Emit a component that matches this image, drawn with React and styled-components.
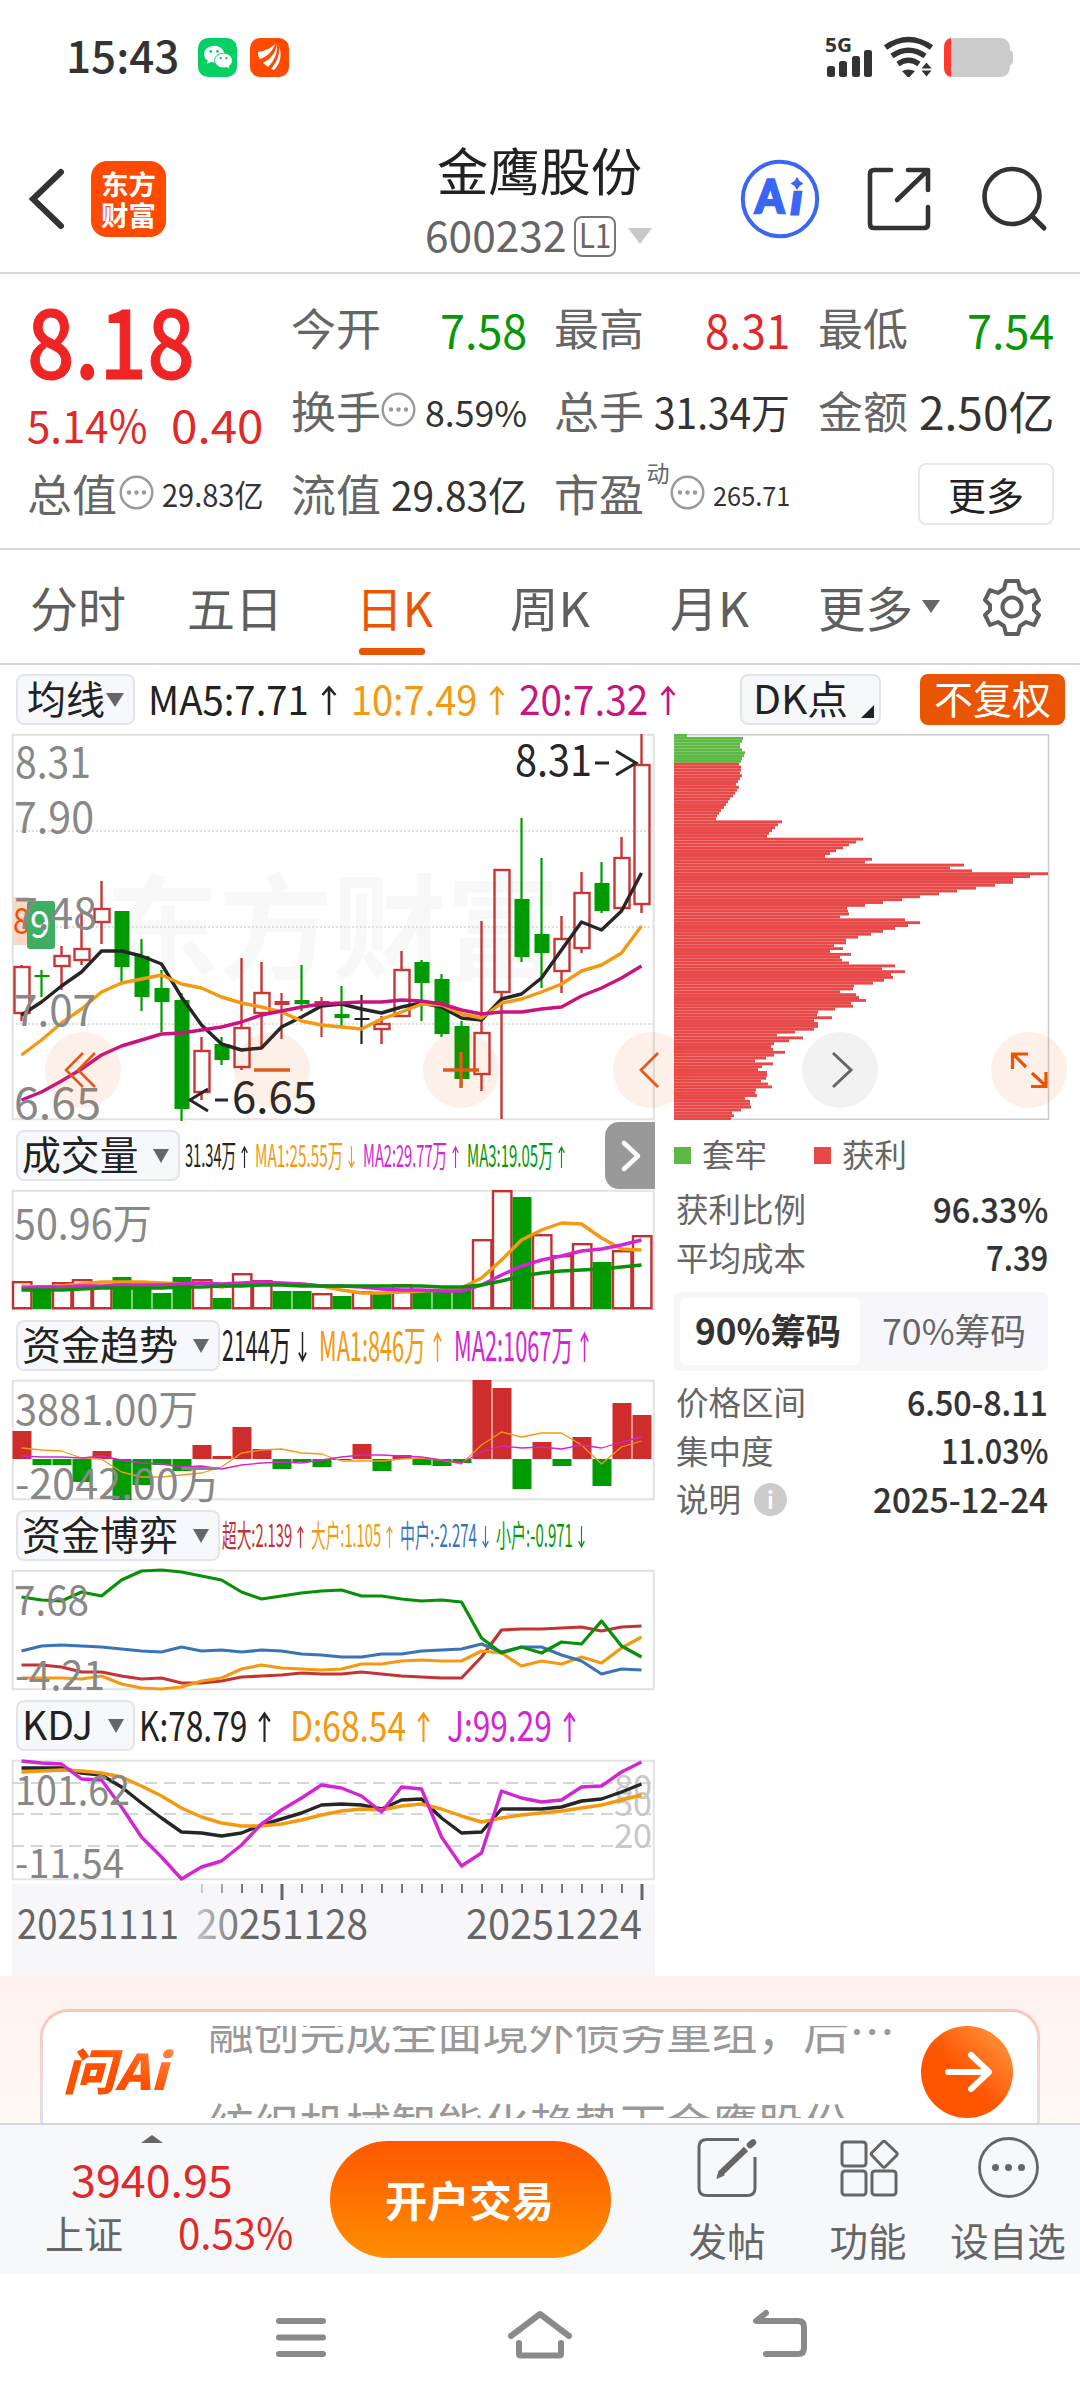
import React, { useLayoutEffect, useRef, useState } from 'react';
import styled, { createGlobalStyle } from 'styled-components';
import { AiFillWechat } from 'react-icons/ai';

/* ───────── palette ───────── */

const RED = '#e02a2a';
const GREEN = '#079707';
const ORANGE = '#ea5504';
const AMBER = '#f39a12';
const PINK = '#c9147f';
const MAGENTA = '#d326d3';
const BLUE = '#3a74b8';
const INK = '#222222';
const GRAY = '#666666';
const FONT = '"Noto Sans CJK SC", sans-serif';

const GlobalStyle = createGlobalStyle`
  * { box-sizing: border-box; }
  body { margin: 0; background: #ffffff; }
  svg { overflow: visible; }
`;

/* ───────── text that is squeezed to its slot ───────── */

const FitBox = styled.span`
  display: inline-block;
  flex: none;
  width: ${(p) => p.$w}px;
  margin-left: ${(p) => p.$ml || 0}px;
  margin-top: ${(p) => p.$mt || 0}px;
  font-size: ${(p) => p.$size}px;
  font-weight: ${(p) => p.$weight || 400};
  color: ${(p) => p.$color || 'inherit'};
  -webkit-text-stroke: ${(p) => p.$stroke || 0}px currentColor;
  line-height: 1.3;
  white-space: nowrap;
`;

const FitInner = styled.span`
  display: inline-block;
  transform-origin: left center;
`;

const Fit = ({ w, size, color, weight, stroke, ml, mt, children }) => {
  const ref = useRef(null);
  const [scale, setScale] = useState(1);
  useLayoutEffect(() => {
    setScale(w / ref.current.offsetWidth);
  }, [w, children]);
  return (
    <FitBox $w={w} $size={size} $color={color} $weight={weight} $stroke={stroke} $ml={ml} $mt={mt}>
      <FitInner ref={ref} style={{ transform: `scaleX(${scale})` }}>{children}</FitInner>
    </FitBox>
  );
};

/* ───────── layout ───────── */

const Page = styled.div`
  width: 1080px;
  height: 2400px;
  overflow: hidden;
  display: flex;
  flex-direction: column;
  background: #ffffff;
  color: ${INK};
  font-family: ${FONT};
`;

const StatusBar = styled.div`
  height: 116px;
  flex: none;
  display: flex;
  align-items: center;
  padding: 0 66px 2px;
  color: #333333;
`;

const AppBadge = styled.span`
  width: 39px;
  height: 39px;
  margin-left: ${(p) => p.$ml}px;
  border-radius: 10px;
  background: ${(p) => p.$bg};
  color: #ffffff;
  display: flex;
  align-items: center;
  justify-content: center;
  font-size: 32px;
`;

const StatusIcons = styled.div`
  margin-left: auto;
  display: flex;
  align-items: center;
  gap: 10px;
`;

const Header = styled.header`
  height: 158px;
  flex: none;
  display: flex;
  border-bottom: 2px solid #d8d8d8;
`;

const HeaderSide = styled.div`
  width: 425px;
  display: flex;
  align-items: center;
  padding: 9px 0 0 28px;
`;

const Logo = styled.div`
  width: 75px;
  height: 76px;
  margin-left: 25px;
  border-radius: 16px;
  background: #ff4a00;
  color: #ffffff;
  display: flex;
  flex-direction: column;
  align-items: center;
  justify-content: center;
  font-size: 27.5px;
  font-weight: 700;
  line-height: 31px;
`;

const TitleBlock = styled.div`
  width: 232px;
  display: flex;
  flex-direction: column;
`;

const CodeRow = styled.div`
  display: flex;
  align-items: center;
  height: 44px;
  margin-top: 12px;
  color: ${GRAY};
`;

const LevelBox = styled.span`
  width: 42px;
  height: 41px;
  margin-left: 7px;
  border: 2px solid #777777;
  border-radius: 8px;
  display: flex;
  align-items: center;
  justify-content: center;
`;

const HeaderActions = styled.div`
  display: flex;
  align-items: center;
  padding: 9px 0 0 83px;
`;

const Quote = styled.section`
  height: 276px;
  flex: none;
  padding: 15px 26px 0 27px;
  display: grid;
  grid-template-columns: repeat(4, 236px);
  grid-template-rows: repeat(3, 83px);
  column-gap: 27.7px;
  border-bottom: 2px solid #d8d8d8;
`;

const PriceCell = styled.div`
  grid-row: span 2;
  display: flex;
  flex-direction: column;
  color: ${RED};
`;

const ChangeRow = styled.div`
  display: flex;
  justify-content: space-between;
`;

const Cell = styled.div`
  display: flex;
  align-items: center;
  color: ${(p) => p.$color || '#333333'};
`;

const Push = styled.span`
  margin-left: auto;
  display: flex;
`;

const Sup = styled.span`
  align-self: flex-start;
  margin: 3px 3px 0 2px;
  font-size: 23px;
  line-height: 28px;
  color: ${GRAY};
`;

const MoreButton = styled.button`
  width: 136px;
  height: 62px;
  margin: -5px 0 0 auto;
  padding: 0;
  border: 2px solid #e8e8ea;
  border-radius: 8px;
  background: #ffffff;
  color: ${INK};
  font: 400 38px ${FONT};
  line-height: 52px;
`;

const Tabs = styled.nav`
  height: 115px;
  flex: none;
  display: flex;
  align-items: center;
  border-bottom: 2px solid #d8d8d8;
  color: #5f5f5f;
`;

const Tab = styled.div`
  height: 100%;
  margin-left: ${(p) => p.$ml}px;
  padding-top: 25px;
  display: flex;
  flex-direction: column;
  align-items: flex-start;
  color: ${(p) => (p.$active ? ORANGE : 'inherit')};

  &::after {
    content: '';
    display: ${(p) => (p.$active ? 'block' : 'none')};
    width: 66px;
    height: 7px;
    margin: 11px 0 0 3px;
    border-radius: 3px;
    background: ${ORANGE};
  }
`;

const MaRow = styled.div`
  height: 69px;
  flex: none;
  display: flex;
  align-items: center;
`;

const Pill = styled.div`
  width: ${(p) => p.$w}px;
  height: 51px;
  flex: none;
  margin-left: ${(p) => p.$ml || 0}px;
  padding: 0 ${(p) => p.$pr || 10}px 0 ${(p) => p.$pl || 8}px;
  display: flex;
  align-items: center;
  justify-content: space-between;
  border: 2px solid ${(p) => (p.$solid ? ORANGE : '#e4e5ea')};
  border-radius: 8px;
  background: ${(p) => (p.$solid ? ORANGE : '#f7f8fb')};
  color: ${(p) => (p.$solid ? '#ffffff' : INK)};
`;

const Triangle = styled.i`
  flex: none;
  margin-left: ${(p) => p.$ml || 0}px;
  border-left: ${(p) => p.$w / 2}px solid transparent;
  border-right: ${(p) => p.$w / 2}px solid transparent;
  border-top: ${(p) => p.$h}px solid ${(p) => p.$color || GRAY};
  transform: ${(p) => (p.$up ? 'rotate(180deg)' : 'none')};
`;

const Corner = styled.i`
  align-self: flex-end;
  margin-bottom: 5px;
  border-left: 13px solid transparent;
  border-bottom: 13px solid ${INK};
`;

const Body = styled.div`
  position: relative;
  height: 1242px;
  flex: none;
  display: flex;
  padding-left: 12px;
`;

const ChartColumn = styled.div`
  width: 643px;
  flex: none;
  display: flex;
  flex-direction: column;
`;

const PaneHead = styled.div`
  height: 70px;
  flex: none;
  display: flex;
  align-items: center;
  padding: 1px 0 0 4px;
`;

const NextTab = styled.div`
  width: 50px;
  height: 67px;
  margin-left: auto;
  border-radius: 14px 0 0 14px;
  background: #999999;
  display: flex;
  align-items: center;
  justify-content: center;
`;

const AxisBox = styled.div`
  height: 92px;
  margin-top: 4px;
  background: #f7f7fa;
`;

const SidePanel = styled.aside`
  width: 374px;
  margin-left: 19px;
  display: flex;
  flex-direction: column;
`;

const Legend = styled.div`
  height: 64px;
  flex: none;
  display: flex;
  align-items: center;
  padding-top: 6px;
  color: ${GRAY};
`;

const Swatch = styled.i`
  width: 17px;
  height: 17px;
  margin-left: ${(p) => p.$ml || 0}px;
  margin-right: 11px;
  background: ${(p) => p.$color};
`;

const InfoRow = styled.div`
  height: 48.5px;
  flex: none;
  display: flex;
  align-items: center;
  justify-content: space-between;
  padding-left: 2px;
  color: #333333;
`;

const InfoLabel = styled.span`
  display: flex;
  align-items: center;
  font-size: 32.5px;
  line-height: 40px;
  color: ${GRAY};
`;

const InfoDot = styled.i`
  width: 33px;
  height: 33px;
  margin: 2px 0 0 13px;
  border-radius: 50%;
  background: #cccccc;
  color: #ffffff;
  font: normal 700 25px/32px Lato, sans-serif;
  text-align: center;
`;

const Segment = styled.div`
  width: 374px;
  height: 79px;
  flex: none;
  margin: 11px 0 6px;
  padding: 6px;
  display: flex;
  border-radius: 6px;
  background: #f7f7fb;
`;

const SegmentItem = styled.div`
  width: ${(p) => (p.$active ? 180 : 182)}px;
  padding-right: ${(p) => (p.$active ? 5 : 0)}px;
  padding-left: ${(p) => (p.$active ? 0 : 5)}px;
  display: flex;
  align-items: center;
  justify-content: center;
  border-radius: 6px;
  background: ${(p) => (p.$active ? '#ffffff' : 'transparent')};
  color: ${(p) => (p.$active ? '#333333' : GRAY)};
`;

/* floats over the candle chart and the chip chart */
const FloatBar = styled.div`
  position: absolute;
  left: 45px;
  top: 298px;
  width: 1022px;
  display: flex;
  justify-content: space-between;
`;

const FloatButton = styled.div`
  width: 76px;
  height: 76px;
  border-radius: 50%;
  background: ${(p) => (p.$gray ? '#f2f2f2' : 'rgba(234, 85, 4, 0.085)')};
`;

const Banner = styled.section`
  height: 147px;
  flex: none;
  padding: 33px 40px 0;
  overflow: hidden;
  background: linear-gradient(#fff2ee, #fff9f4);
`;

const BannerEdge = styled.div`
  height: 150px;
  padding: 3px;
  border-radius: 28px;
  background: linear-gradient(#f6c6bc 0, #f2d9d8 45%, #dcdff0 75%);
`;

const BannerCard = styled.div`
  height: 144px;
  padding-left: 22px;
  border-radius: 25px;
  background: #ffffff;
  display: flex;
`;

const AskLogo = styled.svg`
  width: 112px;
  height: 60px;
  flex: none;
  margin-top: 32px;
  font: italic 900 49px ${FONT};
`;

const Ticker = styled.div`
  width: 700px;
  height: 92px;
  flex: none;
  margin: 14px 0 0 31px;
  overflow: hidden;
  color: #999999;
`;

const TickerLine = styled.div`
  height: 92px;
  font-size: 45.8px;
  line-height: 92px;
  white-space: nowrap;
  transform: translateY(-42px);
`;

const GoButton = styled.div`
  width: 92px;
  height: 92px;
  flex: none;
  margin: 14px 0 0 13px;
  border-radius: 50%;
  background: linear-gradient(45deg, #ff5500 45%, #ff9e48);
`;

const TradeBar = styled.footer`
  height: 151px;
  flex: none;
  display: flex;
  border-top: 2px solid #d6d7dc;
  background: #f7f8fa;
  color: ${GRAY};
`;

const IndexBlock = styled.div`
  width: 304px;
  display: flex;
  flex-direction: column;
  align-items: center;
  padding-top: 10px;
`;

const IndexRow = styled.div`
  display: flex;
  align-items: center;
  height: 50px;
  margin-top: 1px;
  padding-left: 33px;
`;

const OpenButton = styled.div`
  width: 281px;
  height: 117px;
  margin: 16px 0 0 26px;
  padding: 0 2px 1px 0;
  border-radius: 58px;
  display: flex;
  align-items: center;
  justify-content: center;
  background: linear-gradient(#ff5800, #ff8e00);
`;

const ToolItem = styled.div`
  width: ${(p) => p.$w}px;
  margin-left: ${(p) => p.$ml || 0}px;
  padding-top: 12px;
  display: flex;
  flex-direction: column;
  align-items: center;
  font-size: 38.5px;
  line-height: 46px;

  svg { margin-bottom: 18px; }
`;

const NavBar = styled.div`
  height: 127px;
  flex: none;
  display: flex;
  justify-content: space-between;
  padding: 35px 270px 0 273px;
`;

/* ───────── icons ───────── */

const Icon = ({ w, h, ml = 0, color = '#333', sw = 6, children }) => (
  <svg width={w} height={h} viewBox={`0 0 ${w} ${h}`} fill="none" stroke={color} strokeWidth={sw}
    strokeLinecap="round" strokeLinejoin="round" style={{ marginLeft: ml, flex: 'none', display: 'block' }}>
    {children}
  </svg>
);

const Dots = ({ ml = 2, mt = -4 }) => (
  <svg width="35" height="35" viewBox="0 0 35 35" fill="none" style={{ marginLeft: ml, marginTop: mt, flex: 'none' }}>
    <circle cx="17.5" cy="17.5" r="15.8" stroke="#999" strokeWidth="2.4" />
    <g fill="#999">
      <circle cx="10" cy="17.5" r="2.2" />
      <circle cx="17.5" cy="17.5" r="2.2" />
      <circle cx="25" cy="17.5" r="2.2" />
    </g>
  </svg>
);

const Gear = () => (
  <Icon w={58} h={58} ml={43} color="#5f5f5f" sw={4}>
    <path d="M23 3h12l2 8 6 4 8-3 5 10-5 5v5l5 5-5 10-8-3-6 4-2 8H23l-2-8-6-4-8 3-5-10 5-5v-5l-5-5 5-10 8 3 6-4z" />
    <circle cx="29" cy="29" r="9.5" />
  </Icon>
);

/* ───────── chart data (pixel offsets inside each pane) ───────── */

const X = (i) => 9.5 + i * 20;

// [kind, high, top, bottom, low]
const CANDLES = [
  ['r', 231, 232, 280, 287], ['g', 236, 241, 243, 263], ['r', 212, 221, 233, 256], ['r', 175, 214, 227, 231],
  ['r', 147, 174, 189, 210], ['g', 177, 177, 233, 251], ['g', 205, 222, 263, 277], ['g', 236, 254, 268, 298],
  ['g', 259, 266, 375, 387], ['r', 303, 316, 359, 366], ['g', 303, 310, 326, 331], ['r', 224, 293, 334, 336],
  ['r', 228, 258, 280, 313], ['R', 259, 267, 271, 305], ['g', 231, 266, 270, 277], ['R', 263, 267, 273, 303],
  ['g', 252, 280, 284, 292], ['k', 261, 284, 286, 310], ['r', 282, 289, 296, 310], ['r', 217, 235, 283, 283],
  ['g', 226, 228, 249, 287], ['g', 240, 245, 300, 303], ['g', 287, 292, 345, 353], ['r', 187, 298, 341, 357],
  ['r', 135, 135, 259, 385], ['g', 84, 165, 223, 228], ['g', 124, 200, 219, 254], ['r', 182, 204, 238, 259],
  ['r', 138, 158, 215, 219], ['g', 128, 149, 177, 179], ['r', 103, 123, 175, 176], ['r', 0, 30, 171, 179],
];

const MA5 = [281, 268, 252, 238, 217, 217, 222, 230, 263, 291, 310, 316, 314, 293, 283, 272, 270, 275, 279, 273, 269, 273, 284, 286, 265, 260, 244, 216, 188, 196, 177, 139];
const MA10 = [321, 306, 289, 275, 258, 249, 245, 241, 250, 254, 263, 269, 273, 278, 287, 291, 293, 295, 285, 278, 270, 271, 280, 284, 269, 265, 258, 250, 237, 231, 219, 192];
const MA20 = [366, 358, 347, 335, 321, 312, 306, 300, 299, 296, 293, 288, 281, 277, 273, 270, 269, 268, 268, 266, 267, 270, 276, 280, 278, 278, 275, 273, 262, 254, 244, 232];

const VOLUME = [91, 98, 92, 89, 95, 87, 95, 103, 87, 89, 108, 83, 90, 101, 101, 103, 106, 101, 103, 94, 101, 101, 100, 49, 0, 7, 44, 65, 53, 72, 60, 45];
const VOLUME_KIND = 'rgrrrggggrgrrggrgrgrgggrrgrrrgrr';
const VMA1 = [96, 97, 96, 94, 92, 92, 92, 93, 94, 93, 97, 94, 93, 94, 94, 96, 100, 103, 103, 102, 101, 100, 98, 88, 70, 50, 40, 33, 34, 48, 59, 60];
const VMA2 = [98, 97, 97, 96, 96, 95, 95, 95, 94, 93, 94, 93, 92, 93, 94, 96, 96, 97, 99, 100, 100, 101, 101, 95, 85, 76, 70, 66, 61, 59, 55, 50];
const VMA3 = [100, 100, 100, 99, 98, 98, 98, 98, 97, 97, 96, 96, 95, 95, 96, 96, 96, 96, 96, 96, 96, 97, 97, 95, 91, 86, 83, 81, 80, 79, 77, 75];

const FLOW = [51, 85, 85, 102, 71, 120, 105, 85, 91, 65, 76, 47, 69, 89, 82, 87, 80, 64, 91, 75, 85, 86, 83, 0, 8, 109, 62, 86, 57, 106, 23, 35];
const FMA1 = [68, 70, 71, 78, 79, 92, 97, 97, 95, 93, 87, 73, 70, 69, 73, 74, 81, 81, 81, 79, 78, 80, 84, 65, 52, 57, 53, 53, 65, 84, 67, 61];
const FMA2 = [76, 77, 77, 78, 76, 80, 83, 84, 87, 86, 89, 85, 83, 82, 83, 80, 77, 75, 75, 76, 77, 80, 83, 72, 66, 68, 67, 69, 65, 68, 62, 57];

const GAME = {
  big: [95, 95, 97, 102, 102, 106, 109, 108, 113, 113, 111, 107, 106, 105, 103, 104, 104, 102, 104, 106, 107, 108, 108, 87, 60, 59, 59, 58, 57, 61, 57, 56],
  large: [108, 108, 108, 109, 106, 114, 118, 119, 117, 111, 108, 99, 95, 98, 99, 100, 99, 94, 94, 91, 90, 91, 91, 81, 83, 96, 91, 94, 87, 93, 78, 67],
  mid: [81, 76, 75, 76, 77, 79, 81, 82, 77, 81, 80, 82, 80, 81, 84, 85, 87, 87, 84, 84, 81, 80, 79, 74, 82, 77, 77, 85, 91, 104, 99, 100],
  small: [27, 30, 31, 22, 26, 10, 1, 0, 2, 6, 10, 22, 29, 26, 23, 21, 20, 26, 26, 29, 31, 30, 32, 68, 83, 77, 83, 72, 74, 51, 76, 87],
};

const KDJ = {
  k: [8, 8, 8, 13, 15, 27, 43, 58, 72, 73, 76, 73, 65, 59, 53, 45, 44, 45, 49, 40, 39, 58, 73, 72, 49, 49, 49, 47, 41, 39, 32, 24],
  d: [12, 11, 10, 11, 13, 17, 26, 36, 48, 57, 63, 66, 66, 64, 60, 55, 51, 49, 50, 46, 44, 49, 56, 62, 58, 55, 53, 51, 48, 45, 40, 35],
  j: [1, 3, 4, 19, 20, 47, 77, 97, 119, 107, 101, 85, 64, 50, 38, 25, 28, 36, 52, 27, 29, 77, 106, 93, 31, 38, 42, 40, 27, 26, 12, 2],
};

const CHIPS = [
  13, 69, 68, 66, 66, 68, 71, 70, 68, 67,
  65, 67, 67, 66, 68, 66, 64, 62, 65, 63, 61, 59, 56, 54, 52, 50, 47, 45, 43, 42,
  108, 104, 101, 98, 95, 93, 189, 182, 175, 169, 162, 156, 151, 198, 191, 290, 276, 298,
  374, 356, 339, 339, 321, 302, 283, 265, 246, 228, 209, 191, 173, 174, 175, 166,
  231, 246, 234, 221, 209, 197, 184, 172, 172, 160, 169, 156, 177, 166, 168, 175,
  221, 208, 231, 217, 219, 210, 199, 180, 179, 166, 182, 185, 192, 177, 179, 161, 144, 143,
  158, 140, 144, 144, 140, 121, 103, 129, 115, 100, 97, 99, 111, 100, 92, 81, 99, 88,
  84, 93, 93, 92, 87, 94, 98, 82, 81, 83, 71, 76, 76, 77, 67, 58, 60, 57,
];

/* ───────── chart parts ───────── */

const Pane = styled.svg`
  display: block;
  flex: none;
  font-family: ${FONT};
`;

const Frame = ({ h }) => <rect x="0.75" y="0.75" width="641" height={h - 1.5} fill="none" stroke="#e2e2e2" strokeWidth="2" />;

const Line = ({ data, color, w = 3.4 }) => (
  <polyline points={data.map((y, i) => `${X(i)},${y}`).join(' ')} fill="none" stroke={color} strokeWidth={w} strokeLinejoin="round" />
);

const Label = ({ x, y, w, size = 43, color = '#888888', children }) => (
  <text x={x} y={y} fontSize={size} fill={color} textLength={w} lengthAdjust="spacingAndGlyphs">{children}</text>
);

const Candle = ({ i, c: [kind, high, top, bottom, low] }) => {
  const color = { r: '#c83636', R: '#c83636', g: '#009b00', k: INK }[kind];
  const x = X(i);
  if (kind === 'r') {
    return (
      <g stroke={color} strokeWidth="2.4" fill="none">
        <path d={`M${x} ${high}V${top}M${x} ${bottom}V${low}`} />
        <rect x={x - 7} y={top + 1} width="15" height={Math.max(bottom - top - 2, 2)} />
      </g>
    );
  }
  return (
    <g>
      <path d={`M${x} ${high}V${low}`} stroke={color} strokeWidth="2.2" />
      <rect x={x - 7} y={top} width="15" height={bottom - top} fill={color} />
    </g>
  );
};

const PriceChart = () => (
  <Pane width="643" height="386" viewBox="0 0 643 386">
    <text x="93" y="236" fontSize="114" fontWeight="700" fill="#f8f8f8" textLength="455">东方财富</text>
    {[97, 193, 290].map((y) => (
      <path key={y} d={`M0 ${y}H642`} stroke="#d6d6d6" strokeWidth="1.5" strokeDasharray="2 2" />
    ))}
    <Frame h={386} />
    <rect x="1" y="163" width="16" height="48" fill="#fdd8c6" />
    <Label x={1} y={200} w={17} size={36} color={ORANGE}>8</Label>
    {CANDLES.map((c, i) => <Candle key={i} i={i} c={c} />)}
    <Line data={MA5} color="#262626" />
    <Line data={MA10} color={AMBER} />
    <Line data={MA20} color={PINK} />
    <rect x="15" y="167" width="28" height="48" rx="3" fill="#3fae63" />
    <Label x={18} y={204} w={20} size={38} color="#ffffff">9</Label>
    <Label x={3} y={44} w={76}>8.31</Label>
    <Label x={2} y={99} w={80}>7.90</Label>
    <Label x={2} y={195} w={83}>7.48</Label>
    <Label x={2} y={292} w={82}>7.07</Label>
    <Label x={2} y={385} w={87}>6.65</Label>
    <Label x={503} y={42} w={77} color="#262626">8.31</Label>
    <path d="M583 29H597M604 17l20 12-20 12" fill="none" stroke="#262626" strokeWidth="3" />
    <path d="M196 355l-18 11 18 11M203 366h13" fill="none" stroke="#262626" strokeWidth="3" />
    <Label x={220} y={379} w={85} color="#262626">6.65</Label>
  </Pane>
);

const VolumeChart = () => (
  <Pane width="643" height="120" viewBox="0 0 643 120">
    <Frame h={120} />
    <Label x={2} y={49} w={138} size={41}>50.96万</Label>
    {VOLUME.map((y, i) => (VOLUME_KIND[i] === 'g'
      ? <rect key={i} x={i * 20 + 0.5} y={y} width="19" height={119 - y} fill="#009b00" />
      : <rect key={i} x={i * 20 + 1} y={y + 1.2} width="18.4" height={117 - y} fill="none" stroke="#c23232" strokeWidth="2.4" />
    ))}
    <Line data={VMA1} color={AMBER} />
    <Line data={VMA2} color={MAGENTA} />
    <Line data={VMA3} color="#089008" />
  </Pane>
);

const FlowChart = () => (
  <Pane width="643" height="120" viewBox="0 0 643 120">
    <Frame h={120} />
    {FLOW.map((y, i) => (
      <rect key={i} x={i * 20 + 0.5} y={Math.min(y, 79)} width="19" height={Math.abs(y - 79)} fill={y < 79 ? '#cf2c2c' : '#009b00'} />
    ))}
    <Line data={FMA1} color={AMBER} w={1.3} />
    <Line data={FMA2} color={MAGENTA} w={1.3} />
    <Label x={3} y={45} w={183} size={41}>3881.00万</Label>
    <Label x={3} y={119} w={205} size={41}>-2042.00万</Label>
  </Pane>
);

const GameChart = () => (
  <Pane width="643" height="120" viewBox="0 0 643 120">
    <Frame h={120} />
    <Line data={GAME.big} color="#c43434" w={3.2} />
    <Line data={GAME.large} color={AMBER} w={3.2} />
    <Line data={GAME.mid} color={BLUE} w={3.2} />
    <Line data={GAME.small} color="#089008" w={3.2} />
    <Label x={2} y={45} w={75} size={41}>7.68</Label>
    <Label x={3} y={120} w={90} size={41}>-4.21</Label>
  </Pane>
);

const KdjChart = () => (
  <Pane width="643" height="120" viewBox="0 0 643 120">
    <Frame h={120} />
    {[23, 54, 86].map((y) => (
      <path key={y} d={`M0 ${y}H642`} stroke="#c9c9c9" strokeWidth="1.5" strokeDasharray="12 7" />
    ))}
    <Label x={602} y={39} w={38} size={33} color="#c8c8c8">80</Label>
    <Label x={602} y={56} w={38} size={33} color="#c8c8c8">50</Label>
    <Label x={602} y={88} w={38} size={33} color="#c8c8c8">20</Label>
    <Line data={KDJ.k} color="#262626" />
    <Line data={KDJ.d} color={AMBER} />
    <Line data={KDJ.j} color={MAGENTA} />
    <Label x={3} y={45} w={115} size={41}>101.62</Label>
    <Label x={3} y={118} w={109} size={41}>-11.54</Label>
  </Pane>
);

const TimeAxis = () => (
  <AxisBox>
    <Pane width="643" height="92" viewBox="0 0 643 92">
      <defs>
        <linearGradient id="fade" x1="0" x2="1" y1="0" y2="0">
          <stop offset="0" stopColor="#c8c8c8" />
          <stop offset="0.3" stopColor={GRAY} />
        </linearGradient>
      </defs>
      {Array.from({ length: 23 }, (_, n) => n + 9).map((i) => {
        const big = i === 13 || i === 31;
        return (
          <path key={i} d={`M${X(i) + 0.5} 0V${big ? 16 : 9}`} stroke={i === 9 ? '#c4c4c4' : i === 10 ? '#999' : GRAY} strokeWidth={big ? 3 : 1.8} />
        );
      })}
      <Label x={5} y={55} w={162} size={41} color={GRAY}>20251111</Label>
      <Label x={184} y={55} w={172} size={41} color="url(#fade)">20251128</Label>
      <Label x={454} y={55} w={176} size={41} color={GRAY}>20251224</Label>
    </Pane>
  </AxisBox>
);

const ChipChart = () => (
  <Pane width="376" height="386" viewBox="0 0 376 386">
    <path d="M0 0.75H374.5V385.25H0" fill="none" stroke="#cccccc" strokeWidth="1.5" />
    {CHIPS.map((w, i) => (
      <rect key={i} x="0" y={i * (386 / 134)} width={w} height={386 / 134} fill={i < 10 ? '#5cb944' : '#e84848'} />
    ))}
  </Pane>
);

/* ───────── pane headers ───────── */

const ArrowGlyph = styled.span`
  display: inline-block;
  flex: none;
  width: ${(p) => p.$w}px;
  height: ${(p) => p.$h}px;
  margin: ${(p) => (p.$h > 26 ? 2 : 3)}px 0 0 ${(p) => p.$ml}px;
  color: ${(p) => p.$color};

  svg { display: block; width: 100%; height: 100%; }
`;

const Arrow = ({ down, color, w = 16, h = 29, ml = 13 }) => (
  <ArrowGlyph $w={w} $h={h} $ml={ml} $color={color}>
    <svg viewBox="0 0 16 29" preserveAspectRatio="none" fill="none" stroke="currentColor" strokeWidth="2.6">
      <path d={down ? 'M8 0V27M1.5 20L8 27.5L14.5 20' : 'M8 29V2M1.5 9L8 1.5L14.5 9'} />
    </svg>
  </ArrowGlyph>
);

// items: [text, textWidth, gap, color, down]
const Stats = ({ items, size, arrowW, arrowH, arrowGap }) => items.map(([text, w, ml, color, down]) => (
  <React.Fragment key={text}>
    <Fit w={w} ml={ml} size={size} color={color} mt={-3}>{text}</Fit>
    <Arrow down={down} color={color} w={arrowW} h={arrowH} ml={arrowGap} />
  </React.Fragment>
));

const PaneTitle = ({ w, textW, children }) => (
  <Pill $w={w} $pl={4} $pr={9}>
    <Fit w={textW} size={39.5} mt={-5}>{children}</Fit>
    <Triangle $w={17} $h={14} />
  </Pill>
);

/* ───────── screen ───────── */

const Row = ({ label, children }) => (
  <InfoRow>
    <InfoLabel>{label}</InfoLabel>
    {children}
  </InfoRow>
);

const App = () => (
  <Page>
    <GlobalStyle />

    <StatusBar>
      <Fit w={113} size={44} weight={500} mt={-4}>15:43</Fit>
      <AppBadge $ml={19} $bg="#06cf64"><AiFillWechat /></AppBadge>
      <AppBadge $ml={13} $bg="#ff4a00">
        <svg width="30" height="30" viewBox="0 0 30 30" fill="#fff">
          <path d="M3 10C10 9 16 6 20 2C18 9 12 15 5 17C3 15 3 12 3 10Z" />
          <path d="M22 2C21 10 16 17 8 21L13 25C19 19 23 11 22 2Z" />
          <path d="M24 4C25 12 22 20 16 27L19 28C26 21 27 12 24 4Z" />
        </svg>
      </AppBadge>
      <StatusIcons>
        <Icon w={49} h={41} color="none">
          <text x="0" y="15" fontSize="20" fontWeight="700" fill="#333" textLength="27" lengthAdjust="spacingAndGlyphs" fontFamily="Open Sans">5G</text>
          <g fill="#333">
            <rect x="2" y="29" width="8" height="11" rx="2.5" />
            <rect x="14" y="24" width="8" height="16" rx="2.5" />
            <rect x="27" y="19" width="8" height="21" rx="2.5" />
            <rect x="39" y="13" width="8" height="27" rx="2.5" />
          </g>
        </Icon>
        <svg width="50" height="41" viewBox="0 0 50 41" fill="none" stroke="#333" strokeWidth="5.4">
          <path d="M1.5 10.5Q24.500 -5.500 47.500 10.500" />
          <path d="M8 19Q24.500 7.500 41 19" />
          <path d="M14 27Q24.500 19.500 35 27" />
          <path d="M18 34Q24 31 31 34L25.500 40H23.500Z" fill="#333" stroke="none" />
          <path d="M42.500 25.500l5 6h-10zM37.500 33.500h10l-5 6z" fill="#333" stroke="none" />
        </svg>
        <svg width="70" height="41" viewBox="0 0 70 41">
          <path d="M10 1H56Q66 1 66 13Q69 14 69 17V24Q69 27 66 28Q66 40 56 40H10Q0 40 0 30V11Q0 1 10 1Z" fill="#cbcbcb" />
          <path d="M7 1V40Q0 39 0 30V11Q0 2 7 1Z" fill="#ff3b30" />
        </svg>
      </StatusIcons>
    </StatusBar>

    <Header>
      <HeaderSide>
        <Icon w={38} h={62}><path d="M33 4L5 31L33 58" strokeLinejoin="miter" /></Icon>
        <Logo><span>东方</span><span>财富</span></Logo>
      </HeaderSide>
      <TitleBlock>
        <Fit w={205} ml={12} mt={20} size={51}>金鹰股份</Fit>
        <CodeRow>
          <Fit w={142} size={42.5} mt={-5}>600232</Fit>
          <LevelBox><Fit w={32} size={34} mt={-5}>L1</Fit></LevelBox>
          <Triangle $w={24} $h={16} $ml={12} $color="#c9c9c9" />
        </CodeRow>
      </TitleBlock>
      <HeaderActions>
        <svg width="80" height="80" viewBox="0 0 80 80">
          <circle cx="40" cy="40" r="37.200" fill="none" stroke="#3a66f5" strokeWidth="4" />
          <g fill="#3a66f5" stroke="#3a66f5" fontFamily="Lato" fontWeight="900">
            <text x="17" y="54" fontSize="46" strokeWidth="2.500" textLength="29" lengthAdjust="spacingAndGlyphs" transform="skewX(-2)">A</text>
            <text x="57" y="55" fontSize="42" strokeWidth="3" transform="skewX(-8)">ı</text>
          </g>
          <path d="M57 18l2.500 4 4 2.500-4 2.500-2.500 4-2.500-4-4-2.500 4-2.500z" fill="#3a66f5" />
        </svg>
        <Icon w={64} h={66} ml={47} sw={4.6}>
          <path d="M24 4H7Q3 4 3 8V58Q3 62 7 62H57Q61 62 61 58V41" />
          <path d="M41 4H61V24M59 6L30 34" />
        </Icon>
        <Icon w={66} h={66} ml={51} sw={4.6}>
          <circle cx="30" cy="30.500" r="27.500" />
          <path d="M50 50L62 62" strokeWidth="5" />
        </Icon>
      </HeaderActions>
    </Header>

    <Quote>
      <PriceCell>
        <Fit w={168} size={96} weight={500} stroke={1} color="#f02424" mt={-13}>8.18</Fit>
        <ChangeRow>
          <Fit w={120} size={44.5} mt={-6}>5.14%</Fit>
          <Fit w={92} size={44.5} mt={-6}>0.40</Fit>
        </ChangeRow>
      </PriceCell>
      <Cell $color={GREEN}><Fit w={90} size={44} color={GRAY} mt={-5}>今开</Fit><Push><Fit w={87} size={47} mt={-4}>7.58</Fit></Push></Cell>
      <Cell $color={RED}><Fit w={90} size={44} color={GRAY} mt={-5}>最高</Fit><Push><Fit w={85} size={47} mt={-4}>8.31</Fit></Push></Cell>
      <Cell $color={GREEN}><Fit w={90} size={44} color={GRAY} mt={-5}>最低</Fit><Push><Fit w={87} size={47} mt={-4}>7.54</Fit></Push></Cell>

      <Cell><Fit w={90} size={44} color={GRAY} mt={-6}>换手</Fit><Dots ml={0} mt={-8} /><Push><Fit w={102} size={36} mt={-4}>8.59%</Fit></Push></Cell>
      <Cell><Fit w={90} size={44} color={GRAY} mt={-6}>总手</Fit><Push><Fit w={136} size={42} mt={-5}>31.34万</Fit></Push></Cell>
      <Cell><Fit w={90} size={44} color={GRAY} mt={-6}>金额</Fit><Push><Fit w={135} size={45} mt={-5}>2.50亿</Fit></Push></Cell>

      <Cell><Fit w={90} size={44} color={GRAY} mt={-6}>总值</Fit><Dots ml={2} mt={-8} /><Push><Fit w={101} size={31} mt={-4}>29.83亿</Fit></Push></Cell>
      <Cell><Fit w={90} size={44} color={GRAY} mt={-6}>流值</Fit><Push><Fit w={136} size={40} mt={-5}>29.83亿</Fit></Push></Cell>
      <Cell>
        <Fit w={90} size={44} color={GRAY} mt={-6}>市盈</Fit>
        <Sup>动</Sup>
        <Dots ml={-2} mt={-8} />
        <Push><Fit w={77} size={27} mt={-3}>265.71</Fit></Push>
      </Cell>
      <Cell><MoreButton>更多</MoreButton></Cell>
    </Quote>

    <Tabs>
      <Tab $ml={30}><Fit w={96} size={48}>分时</Fit></Tab>
      <Tab $ml={61}><Fit w={96} size={48}>五日</Fit></Tab>
      <Tab $ml={73} $active><Fit w={77} size={48}>日K</Fit></Tab>
      <Tab $ml={77}><Fit w={80} size={48}>周K</Fit></Tab>
      <Tab $ml={80}><Fit w={79} size={48}>月K</Fit></Tab>
      <Tab $ml={69}><Fit w={95} size={48}>更多</Fit></Tab>
      <Triangle $w={18} $h={13} $ml={9} />
      <Gear />
    </Tabs>

    <MaRow>
      <Pill $w={119} $ml={16} $pl={9} $pr={9}>
        <Fit w={78} size={39} mt={-5}>均线</Fit>
        <Triangle $w={18} $h={14} />
      </Pill>
      <Stats
        size={40} arrowW={16} arrowH={29} arrowGap={12}
        items={[['MA5:7.71', 161, 13, INK], ['10:7.49', 126, 14, AMBER], ['20:7.32', 129, 14, PINK]]}
      />
      <Pill $w={141} $ml={64} $pl={11} $pr={5}>
        <Fit w={95} size={39} mt={-5}>DK点</Fit>
        <Corner />
      </Pill>
      <Pill $solid $w={145} $ml={39} $pl={12} $pr={12}>
        <Fit w={117} size={39} mt={-5}>不复权</Fit>
      </Pill>
    </MaRow>

    <Body>
      <ChartColumn>
        <PriceChart />
        <PaneHead>
          <PaneTitle w={164} textW={117}>成交量</PaneTitle>
          <Stats
            size={31} arrowW={7} arrowH={22} arrowGap={5}
            items={[['31.34万', 51, 5, INK], ['MA1:25.55万', 88, 7, AMBER, true], ['MA2:29.77万', 84, 8, MAGENTA], ['MA3:19.05万', 86, 8, GREEN]]}
          />
          <NextTab><Icon w={20} h={32} color="#fff" sw={4.5}><path d="M4 3L18 16L4 29" /></Icon></NextTab>
        </PaneHead>
        <VolumeChart />
        <PaneHead>
          <PaneTitle w={204} textW={156}>资金趋势</PaneTitle>
          <Stats
            size={41} arrowW={9} arrowH={30} arrowGap={7}
            items={[['2144万', 69, 2, INK, true], ['MA1:846万', 107, 12, AMBER], ['MA2:1067万', 119, 12, MAGENTA]]}
          />
        </PaneHead>
        <FlowChart />
        <PaneHead>
          <PaneTitle w={204} textW={156}>资金博弈</PaneTitle>
          <Stats
            size={31} arrowW={7} arrowH={22} arrowGap={5}
            items={[['超大:2.139', 70, 2, '#c23232'], ['大户:1.105', 70, 7, AMBER], ['中户:-2.274', 77, 7, BLUE, true], ['小户:-0.971', 77, 7, GREEN, true]]}
          />
        </PaneHead>
        <GameChart />
        <PaneHead>
          <PaneTitle w={119} textW={71}>KDJ</PaneTitle>
          <Stats
            size={41} arrowW={13} arrowH={30} arrowGap={11}
            items={[['K:78.79', 108, 4, INK], ['D:68.54', 116, 19, AMBER], ['J:99.29', 105, 17, MAGENTA]]}
          />
        </PaneHead>
        <KdjChart />
        <TimeAxis />
      </ChartColumn>

      <SidePanel>
        <ChipChart />
        <Legend>
          <Swatch $color="#5cb944" /><Fit w={65} size={32} mt={-3}>套牢</Fit>
          <Swatch $color="#e84848" $ml={47} /><Fit w={65} size={32} mt={-3}>获利</Fit>
        </Legend>
        <Row label="获利比例"><Fit w={115} size={34.5} weight={500} stroke={0.2}>96.33%</Fit></Row>
        <Row label="平均成本"><Fit w={62} size={34.5} weight={500} stroke={0.2}>7.39</Fit></Row>
        <Segment>
          <SegmentItem $active><Fit w={146} size={36} weight={700} mt={-4}>90%筹码</Fit></SegmentItem>
          <SegmentItem><Fit w={144} size={36} mt={-4}>70%筹码</Fit></SegmentItem>
        </Segment>
        <Row label="价格区间"><Fit w={141} size={34.5} weight={500} stroke={0.2}>6.50-8.11</Fit></Row>
        <Row label="集中度"><Fit w={107} size={34.5} weight={500} stroke={0.2}>11.03%</Fit></Row>
        <Row label={<>说明<InfoDot>i</InfoDot></>}><Fit w={175} size={34.5} weight={500} stroke={0.2}>2025-12-24</Fit></Row>
      </SidePanel>

      <FloatBar>
        <FloatButton><Icon w={76} h={76} color="#e05a1c" sw={2.6}><path d="M38 21L21 38L38 55M50 21L33 38L50 55" strokeLinecap="butt" strokeLinejoin="miter" /></Icon></FloatButton>
        <FloatButton><Icon w={76} h={76} color="#e05a1c" sw={3.4}><path d="M20 38H56" strokeLinecap="butt" /></Icon></FloatButton>
        <FloatButton><Icon w={76} h={76} color="#e05a1c" sw={3.4}><path d="M20 38H56M38 20V56" strokeLinecap="butt" /></Icon></FloatButton>
        <FloatButton><Icon w={76} h={76} color="#e05a1c" sw={2.8}><path d="M45 21L28 38L45 55" strokeLinecap="butt" strokeLinejoin="miter" /></Icon></FloatButton>
        <FloatButton $gray><Icon w={76} h={76} color={GRAY} sw={3}><path d="M31 21L49 38L31 55" strokeLinecap="butt" strokeLinejoin="miter" /></Icon></FloatButton>
        <FloatButton><Icon w={76} h={76} color={ORANGE} sw={3.2}><path d="M37 22H21.500V37M22 22L35 35M40 54.500H55V40M55 54L41 41" strokeLinecap="butt" strokeLinejoin="miter" /></Icon></FloatButton>
      </FloatBar>
    </Body>

    <Banner>
      <BannerEdge>
        <BannerCard>
          <AskLogo viewBox="0 0 112 60">
            <defs>
              <linearGradient id="ask" x1="0" x2="1" y1="1" y2="0">
                <stop offset="0.5" stopColor="#ff5000" />
                <stop offset="1" stopColor="#ff9a5a" />
              </linearGradient>
            </defs>
            <text x="-2" y="46" fill="url(#ask)" textLength="104" lengthAdjust="spacingAndGlyphs">问Ai</text>
          </AskLogo>
          <Ticker>
            <TickerLine>融创完成全面境外债务重组，后…</TickerLine>
            <TickerLine>纺织机械智能化趋势下金鹰股份</TickerLine>
          </Ticker>
          <GoButton><Icon w={92} h={92} color="#fff" sw={6}><path d="M27 46H67M50 29L68 46L50 63" /></Icon></GoButton>
        </BannerCard>
      </BannerEdge>
    </Banner>

    <TradeBar>
      <IndexBlock>
        <Triangle $up $w={22} $h={8} />
        <Fit w={162} size={44} color={RED} mt={7}>3940.95</Fit>
        <IndexRow>
          <Fit w={78} size={38.5} mt={-3}>上证</Fit>
          <Fit w={115} size={42} ml={55} color={RED} mt={-3}>0.53%</Fit>
        </IndexRow>
      </IndexBlock>
      <OpenButton><Fit w={169} size={42} weight={700} color="#fff">开户交易</Fit></OpenButton>
      <ToolItem $w={80} $ml={76}>
        <Icon w={61} h={61} color={GRAY} sw={3}>
          <path d="M42 2.500H10Q2 2.500 2 10V51Q2 58.500 10 58.500H50Q58 58.500 58 51V20" strokeLinecap="butt" />
          <path d="M24 36L49 12" strokeWidth="6" strokeLinecap="butt" />
          <path d="M53 8L56 5.500" strokeWidth="6.500" />
          <path d="M20 41L22 34L27 38Z" fill={GRAY} strokeWidth="1" />
        </Icon>
        发帖
      </ToolItem>
      <ToolItem $w={80} $ml={61}>
        <Icon w={61} h={61} color={GRAY} sw={3}>
          <rect x="4" y="5" width="24" height="24" rx="3" />
          <rect x="4" y="34" width="24" height="24" rx="3" />
          <rect x="34" y="34" width="24" height="24" rx="3" />
          <path d="M44.500 5Q46 3.500 47.500 5L58.500 15.500Q60 17 58.500 18.500L47.500 29.500Q46 31 44.500 29.500L34 18.500Q32.500 17 34 15.500Z" />
        </Icon>
        功能
      </ToolItem>
      <ToolItem $w={120} $ml={40}>
        <Icon w={61} h={61} color={GRAY} sw={2.8}>
          <circle cx="30.500" cy="30.500" r="29" />
          <g fill={GRAY} stroke="none">
            <circle cx="17.500" cy="30.500" r="3.500" />
            <circle cx="30.500" cy="30.500" r="3.500" />
            <circle cx="43.500" cy="30.500" r="3.500" />
          </g>
        </Icon>
        设自选
      </ToolItem>
    </TradeBar>

    <NavBar>
      <Icon w={56} h={56} color="#8a8a8a" sw={6}><path d="M6 12H50M6 28.500H50M6 45H50" /></Icon>
      <Icon w={66} h={56} color="#8a8a8a" sw={6}><path d="M4 27L33 5L62 27M12 34V45Q12 46.500 14 46.500H52Q54 46.500 54 45V34" /></Icon>
      <Icon w={60} h={56} color="#8a8a8a" sw={6}><path d="M16 4L6 12H48Q54 12 54 18V39Q54 45 48 45H16" /></Icon>
    </NavBar>
  </Page>
);

export default App;
